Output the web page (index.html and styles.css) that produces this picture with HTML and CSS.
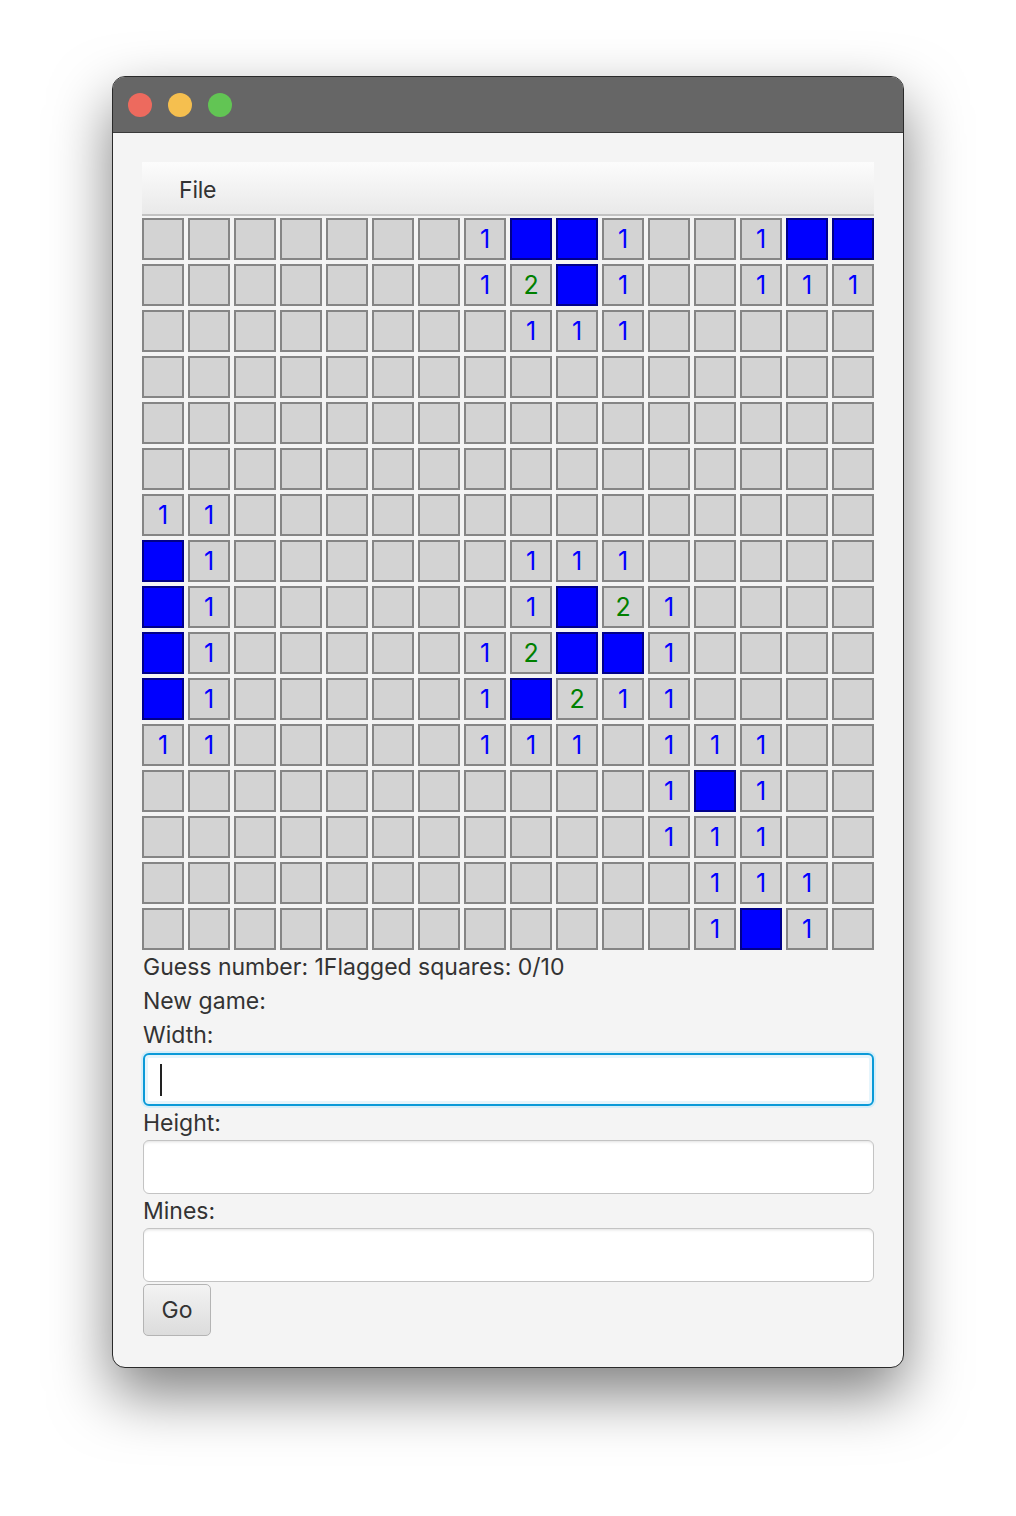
FILE: index.html
```html
<!DOCTYPE html>
<html>
<head>
<meta charset="utf-8">
<link rel="stylesheet" href="styles.css">
</head>
<body>
<div class="window">
  <div class="titlebar">
    <span class="light red"></span><span class="light yellow"></span><span class="light green"></span>
  </div>
  <div class="content">
    <div class="menubar"><span class="menu">File</span></div>
    <div class="grid">
      <!-- row 0 -->
      <span class="c"></span><span class="c"></span><span class="c"></span><span class="c"></span><span class="c"></span><span class="c"></span><span class="c"></span><span class="c n1">1</span><span class="c m"></span><span class="c m"></span><span class="c n1">1</span><span class="c"></span><span class="c"></span><span class="c n1">1</span><span class="c m"></span><span class="c m"></span>
      <!-- row 1 -->
      <span class="c"></span><span class="c"></span><span class="c"></span><span class="c"></span><span class="c"></span><span class="c"></span><span class="c"></span><span class="c n1">1</span><span class="c n2">2</span><span class="c m"></span><span class="c n1">1</span><span class="c"></span><span class="c"></span><span class="c n1">1</span><span class="c n1">1</span><span class="c n1">1</span>
      <!-- row 2 -->
      <span class="c"></span><span class="c"></span><span class="c"></span><span class="c"></span><span class="c"></span><span class="c"></span><span class="c"></span><span class="c"></span><span class="c n1">1</span><span class="c n1">1</span><span class="c n1">1</span><span class="c"></span><span class="c"></span><span class="c"></span><span class="c"></span><span class="c"></span>
      <!-- row 3 -->
      <span class="c"></span><span class="c"></span><span class="c"></span><span class="c"></span><span class="c"></span><span class="c"></span><span class="c"></span><span class="c"></span><span class="c"></span><span class="c"></span><span class="c"></span><span class="c"></span><span class="c"></span><span class="c"></span><span class="c"></span><span class="c"></span>
      <!-- row 4 -->
      <span class="c"></span><span class="c"></span><span class="c"></span><span class="c"></span><span class="c"></span><span class="c"></span><span class="c"></span><span class="c"></span><span class="c"></span><span class="c"></span><span class="c"></span><span class="c"></span><span class="c"></span><span class="c"></span><span class="c"></span><span class="c"></span>
      <!-- row 5 -->
      <span class="c"></span><span class="c"></span><span class="c"></span><span class="c"></span><span class="c"></span><span class="c"></span><span class="c"></span><span class="c"></span><span class="c"></span><span class="c"></span><span class="c"></span><span class="c"></span><span class="c"></span><span class="c"></span><span class="c"></span><span class="c"></span>
      <!-- row 6 -->
      <span class="c n1">1</span><span class="c n1">1</span><span class="c"></span><span class="c"></span><span class="c"></span><span class="c"></span><span class="c"></span><span class="c"></span><span class="c"></span><span class="c"></span><span class="c"></span><span class="c"></span><span class="c"></span><span class="c"></span><span class="c"></span><span class="c"></span>
      <!-- row 7 -->
      <span class="c m"></span><span class="c n1">1</span><span class="c"></span><span class="c"></span><span class="c"></span><span class="c"></span><span class="c"></span><span class="c"></span><span class="c n1">1</span><span class="c n1">1</span><span class="c n1">1</span><span class="c"></span><span class="c"></span><span class="c"></span><span class="c"></span><span class="c"></span>
      <!-- row 8 -->
      <span class="c m"></span><span class="c n1">1</span><span class="c"></span><span class="c"></span><span class="c"></span><span class="c"></span><span class="c"></span><span class="c"></span><span class="c n1">1</span><span class="c m"></span><span class="c n2">2</span><span class="c n1">1</span><span class="c"></span><span class="c"></span><span class="c"></span><span class="c"></span>
      <!-- row 9 -->
      <span class="c m"></span><span class="c n1">1</span><span class="c"></span><span class="c"></span><span class="c"></span><span class="c"></span><span class="c"></span><span class="c n1">1</span><span class="c n2">2</span><span class="c m"></span><span class="c m"></span><span class="c n1">1</span><span class="c"></span><span class="c"></span><span class="c"></span><span class="c"></span>
      <!-- row 10 -->
      <span class="c m"></span><span class="c n1">1</span><span class="c"></span><span class="c"></span><span class="c"></span><span class="c"></span><span class="c"></span><span class="c n1">1</span><span class="c m"></span><span class="c n2">2</span><span class="c n1">1</span><span class="c n1">1</span><span class="c"></span><span class="c"></span><span class="c"></span><span class="c"></span>
      <!-- row 11 -->
      <span class="c n1">1</span><span class="c n1">1</span><span class="c"></span><span class="c"></span><span class="c"></span><span class="c"></span><span class="c"></span><span class="c n1">1</span><span class="c n1">1</span><span class="c n1">1</span><span class="c"></span><span class="c n1">1</span><span class="c n1">1</span><span class="c n1">1</span><span class="c"></span><span class="c"></span>
      <!-- row 12 -->
      <span class="c"></span><span class="c"></span><span class="c"></span><span class="c"></span><span class="c"></span><span class="c"></span><span class="c"></span><span class="c"></span><span class="c"></span><span class="c"></span><span class="c"></span><span class="c n1">1</span><span class="c m"></span><span class="c n1">1</span><span class="c"></span><span class="c"></span>
      <!-- row 13 -->
      <span class="c"></span><span class="c"></span><span class="c"></span><span class="c"></span><span class="c"></span><span class="c"></span><span class="c"></span><span class="c"></span><span class="c"></span><span class="c"></span><span class="c"></span><span class="c n1">1</span><span class="c n1">1</span><span class="c n1">1</span><span class="c"></span><span class="c"></span>
      <!-- row 14 -->
      <span class="c"></span><span class="c"></span><span class="c"></span><span class="c"></span><span class="c"></span><span class="c"></span><span class="c"></span><span class="c"></span><span class="c"></span><span class="c"></span><span class="c"></span><span class="c"></span><span class="c n1">1</span><span class="c n1">1</span><span class="c n1">1</span><span class="c"></span>
      <!-- row 15 -->
      <span class="c"></span><span class="c"></span><span class="c"></span><span class="c"></span><span class="c"></span><span class="c"></span><span class="c"></span><span class="c"></span><span class="c"></span><span class="c"></span><span class="c"></span><span class="c"></span><span class="c n1">1</span><span class="c m"></span><span class="c n1">1</span><span class="c"></span>
    </div>
    <div class="label">Guess number: 1Flagged squares: 0/10</div>
    <div class="label">New game:</div>
    <div class="label">Width:</div>
    <div class="field focused"><span class="caret"></span></div>
    <div class="label">Height:</div>
    <div class="field"></div>
    <div class="label">Mines:</div>
    <div class="field"></div>
    <button class="go">Go</button>
  </div>
</div>
</body>
</html>
```
FILE: styles.css
```css
html, body {
  margin: 0;
  padding: 0;
  background: #ffffff;
}
body {
  font-family: Inter, "Liberation Sans", sans-serif;
  min-height: 1516px;
  padding-top: 76px;
  box-sizing: border-box;
}
.window {
  margin: 0 0 0 112px;
  width: 792px;
  height: 1292px;
  box-sizing: border-box;
  border: 1px solid #2a2a2a;
  border-radius: 13px;
  background: #f4f4f4;
  box-shadow: 0 26px 60px rgba(0, 0, 0, 0.5);
  overflow: hidden;
}
.titlebar {
  height: 55px;
  background: #666666;
  border-bottom: 1px solid #3a3a3a;
  display: flex;
  align-items: center;
  padding-left: 15px;
  gap: 16px;
}
.light {
  width: 24px;
  height: 24px;
  border-radius: 50%;
  display: block;
}
.red { background: #ed6a5e; }
.yellow { background: #f5bf4f; }
.green { background: #62c554; }
.content {
  padding: 29px 29px 0 29px;
}
.menubar {
  box-sizing: border-box;
  height: 54px;
  padding-top: 4px;
  background: linear-gradient(#fcfcfc, #e9e9e9);
  border-bottom: 2px solid #c2c2c2;
  display: flex;
  align-items: center;
  padding-left: 37px;
}
.menu {
  font-size: 23px;
  color: #333333;
  letter-spacing: -0.2px;
}
.grid {
  display: grid;
  grid-template-columns: repeat(16, 42px);
  grid-auto-rows: 42px;
  gap: 4px;
  margin-top: 2px;
}
.c {
  box-sizing: border-box;
  border: 2px solid #858585;
  background: #d3d3d3;
  display: flex;
  align-items: center;
  justify-content: center;
  font-size: 25px;
  line-height: 1;
}
.m {
  background: #0000ff;
  border-color: #00008a;
}
.n1 { color: #0000ff; }
.n2 { color: #008000; }
.label {
  height: 34px;
  line-height: 35px;
  font-size: 23px;
  color: #333333;
  letter-spacing: 0;
  padding-left: 1px;
}
.field {
  box-sizing: border-box;
  height: 54px;
  background: #ffffff;
  border: 1px solid #c3c3c3;
  border-radius: 6px;
  box-shadow: inset 0 3px 3px -2px rgba(0, 0, 0, 0.12);
  margin-left: 1px;
  width: 731px;
}
.field.focused {
  border: 2px solid #0a9ad8;
  box-shadow: 0 0 0 2px #d5eef9, inset 0 0 0 3px #e6f5fc;
  display: flex;
  align-items: center;
  padding-left: 15px;
  margin-top: 1px;
  height: 53px;
}
.caret {
  width: 2px;
  height: 32px;
  background: #222222;
  display: block;
}
.go {
  display: block;
  margin-top: 2px;
  margin-left: 1px;
  width: 68px;
  height: 52px;
  border: 1px solid #b4b4b4;
  border-radius: 5px;
  background: linear-gradient(#f3f3f3, #dcdcdc);
  font-family: Inter, "Liberation Sans", sans-serif;
  font-size: 23px;
  color: #333333;
  padding: 0;
}
```
